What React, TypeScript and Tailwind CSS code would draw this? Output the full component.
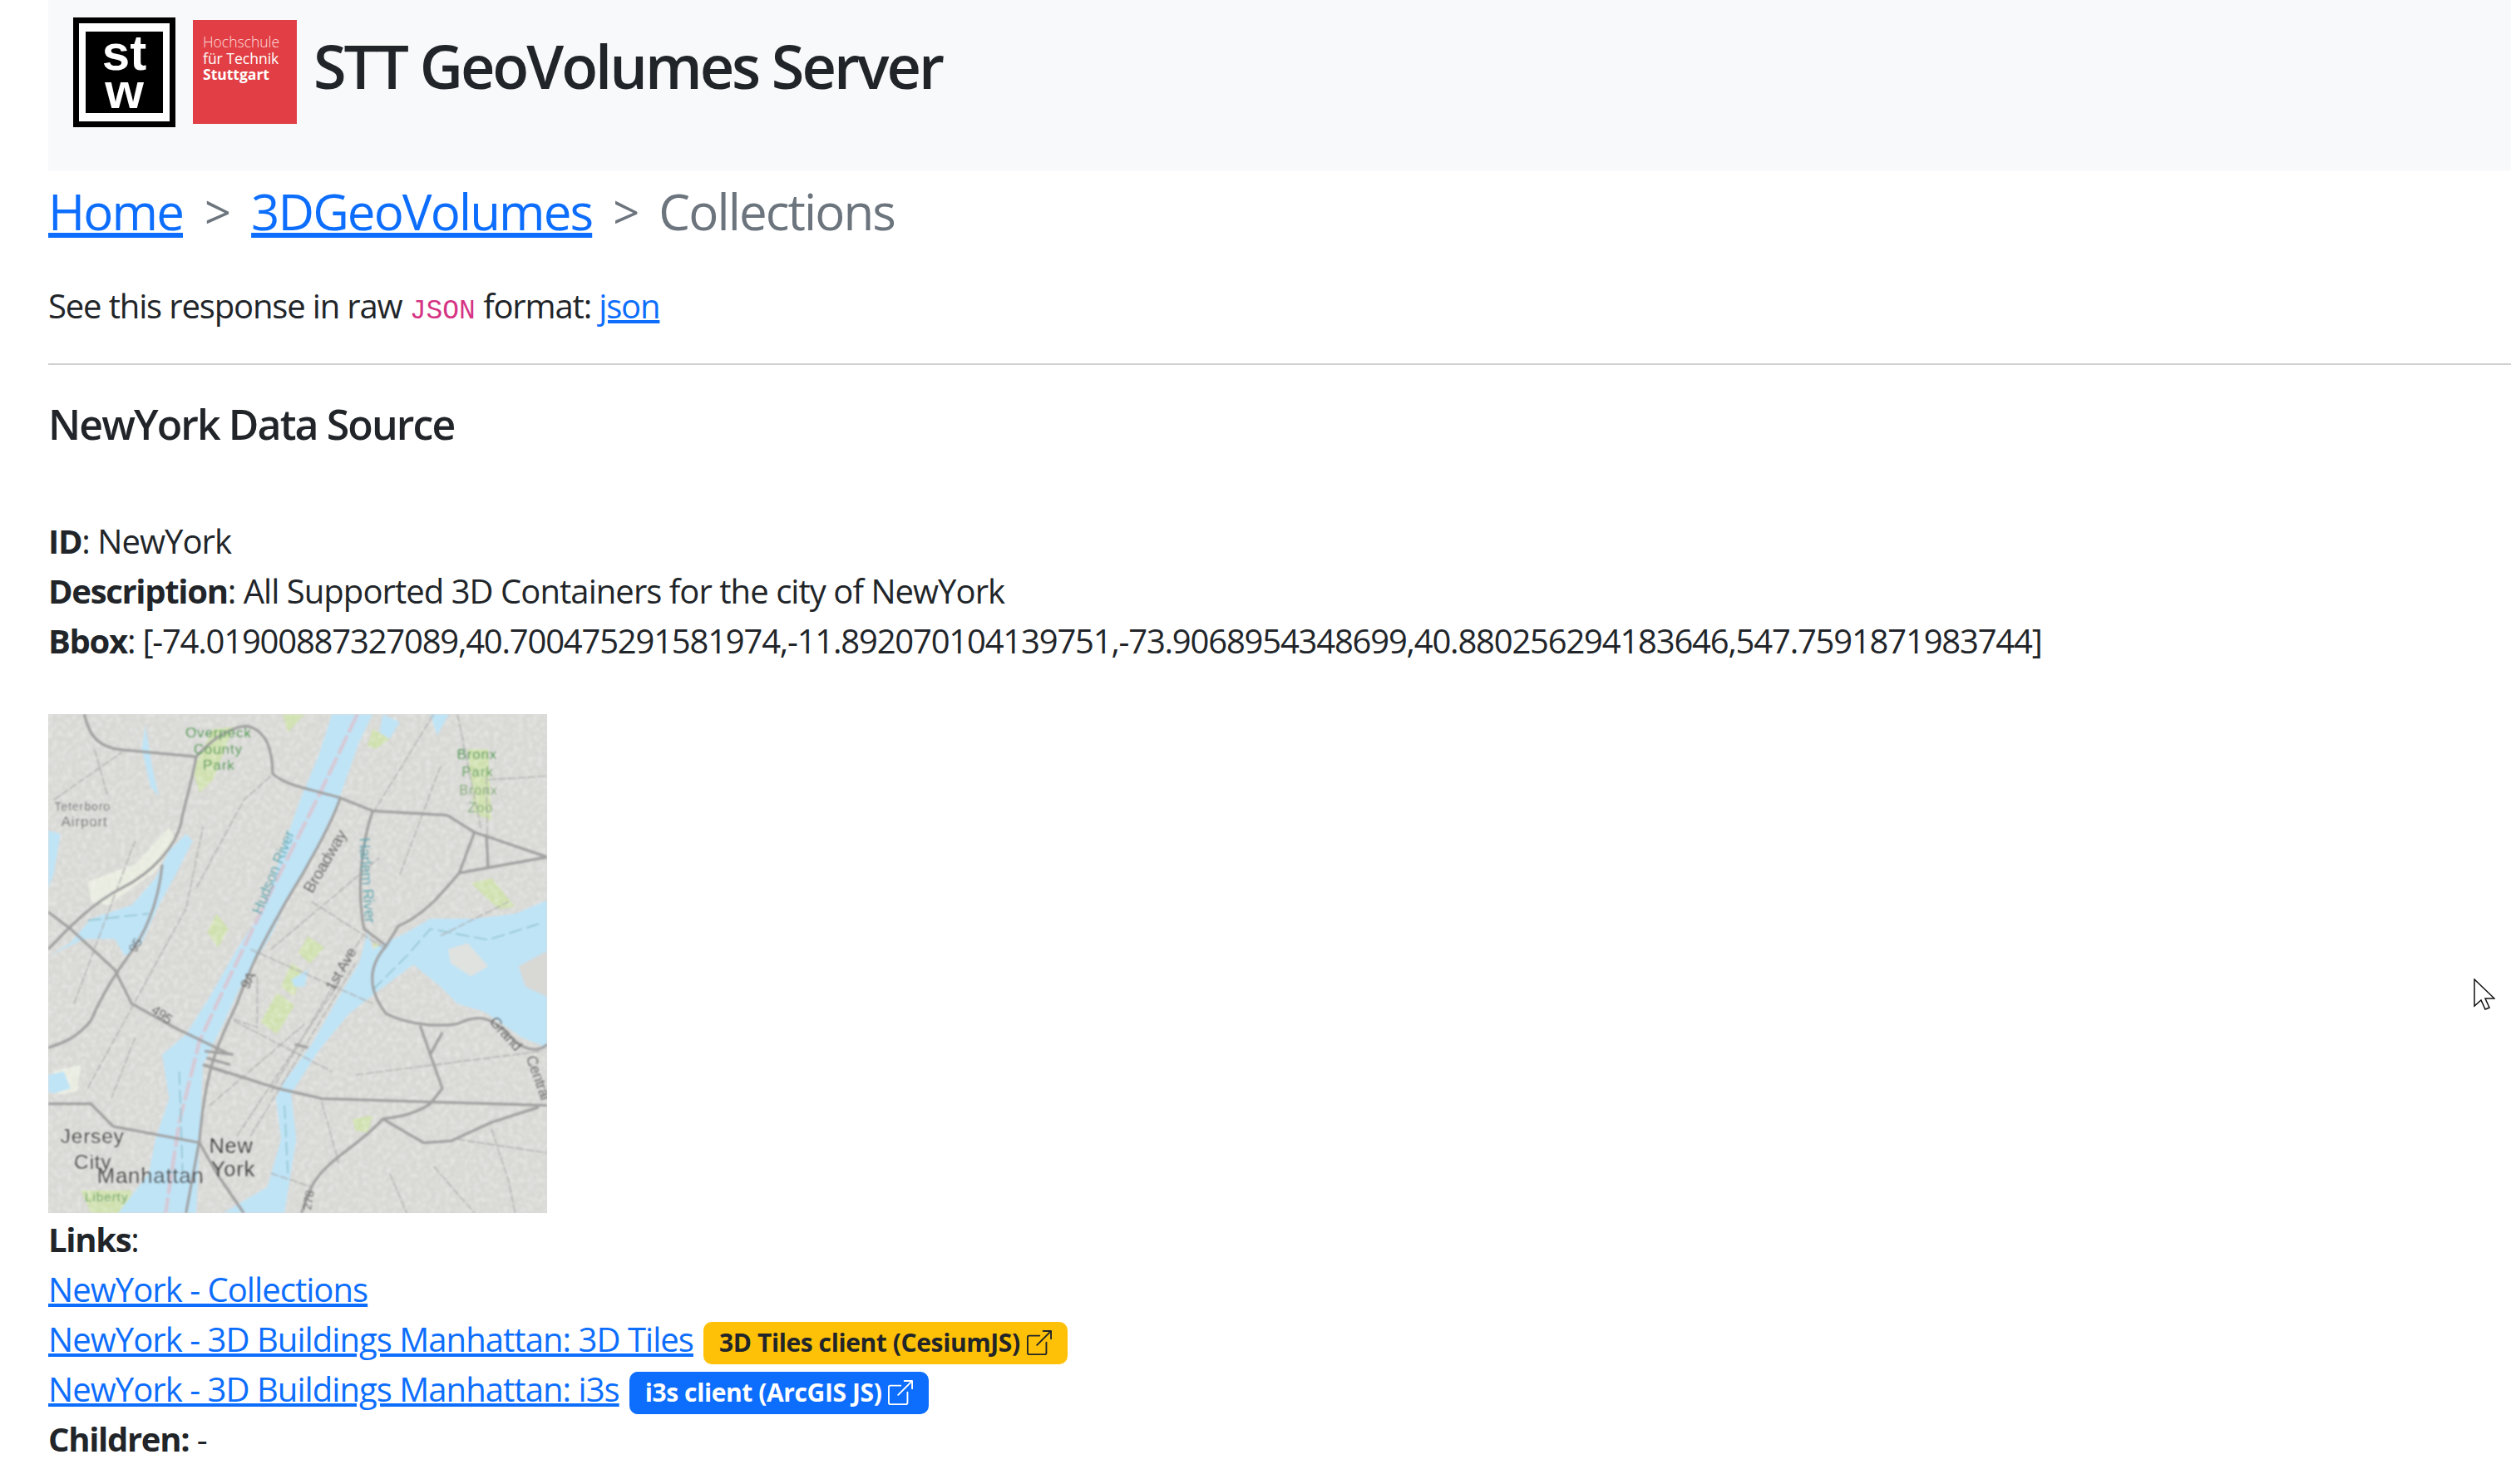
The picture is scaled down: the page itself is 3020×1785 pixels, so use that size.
import { BsBoxArrowUpRight } from 'react-icons/bs'

const roadsMajor = [
  'M150 47 C165 110 190 145 260 152 L480 172 C520 130 570 85 630 82 C690 95 705 160 705 222 C740 255 800 265 900 292 L1000 332 L1220 345 L1300 395 L1514 468',
  'M480 172 C470 240 445 310 435 370 C420 430 360 510 260 560 C180 600 110 670 44 740',
  'M380 490 C370 590 340 680 280 760 C230 830 200 880 170 950 C130 1000 90 1015 44 1030',
  'M44 630 L110 680 L240 800 L290 900 L415 970 L580 1050',
  'M905 292 C880 370 800 510 750 590 C700 680 650 760 600 900 C560 990 510 1060 490 1300 L450 1517',
  'M1000 332 C970 420 950 560 975 680 L1040 730 L1075 672 C1150 640 1200 580 1255 515 L1514 468',
  'M1300 395 L1255 515 M1335 400 L1340 500',
  'M1040 730 C985 790 985 860 1040 930 C1100 960 1180 970 1250 960 C1300 935 1340 930 1400 990 C1440 1040 1490 1045 1514 1020',
  'M500 1080 L720 1150 L850 1180 L1180 1190 L1514 1200',
  'M1140 965 L1205 1150 L1170 1195 C1120 1230 1060 1235 1030 1240 L1150 1310 L1230 1305 L1350 1250 L1490 1205',
  'M1205 985 L1170 1050',
  'M1030 1240 C960 1320 860 1360 820 1440 L790 1517',
  'M44 1195 L170 1195 L235 1262 L490 1310',
  'M490 1310 L540 1400 L620 1517',
  'M500 1080 L575 1105 M505 1040 L590 1050 M510 1060 L580 1080 M770 1020 L810 1030',
]

const roadsMinor = [
  'M640 740 L1000 900 M590 950 L880 1100 M700 740 L1020 470 M820 600 L1040 740',
  'M520 1200 L800 960 M600 1290 L900 840 M640 1290 L950 780 M700 1160 L970 700',
  'M660 820 L660 970 M590 945 L660 970 M1335 230 L1340 500 M1340 240 L1514 230',
  'M160 1150 L450 620 L500 380 M950 1110 L1500 1040 M850 1190 L900 1370 M1250 1300 L1514 1340',
  'M1350 1270 L1400 1420 L1420 1517 M700 1400 L820 1440 M540 1090 L720 1150',
  'M1000 340 L1180 47 M1250 47 L1320 390 M60 300 L260 160 M180 150 L220 290',
  'M480 560 L620 300 L700 230 M120 900 L300 420 M1080 520 L1200 200 M1200 700 L1400 600',
  'M300 1000 L230 1180 M1050 1400 L1100 1517 M1180 1380 L1300 1517',
]

const labels = [
  { t: 'Overpeck', x: 448, y: 116, s: 42, c: '#4f9a52' },
  { t: 'County', x: 472, y: 164, s: 42, c: '#4f9a52' },
  { t: 'Park', x: 500, y: 210, s: 42, c: '#4f9a52' },
  { t: 'Bronx', x: 1248, y: 180, s: 42, c: '#4f9a52' },
  { t: 'Park', x: 1262, y: 230, s: 42, c: '#6aa565' },
  { t: 'Bronx', x: 1255, y: 285, s: 40, c: '#86ad7c' },
  { t: 'Zoo', x: 1280, y: 337, s: 40, c: '#86ad7c' },
  { t: 'Teterboro', x: 62, y: 330, s: 35, c: '#7c7c7c' },
  { t: 'Airport', x: 82, y: 378, s: 42, c: '#7c7c7c' },
  { t: 'Jersey', x: 80, y: 1312, s: 60, c: '#4d4d4d' },
  { t: 'City', x: 120, y: 1386, s: 60, c: '#4d4d4d' },
  { t: 'Manhattan', x: 188, y: 1430, s: 63, c: '#4d4d4d' },
  { t: 'New', x: 518, y: 1340, s: 62, c: '#3f3f3f' },
  { t: 'York', x: 524, y: 1410, s: 62, c: '#3f3f3f' },
  { t: 'Liberty', x: 152, y: 1482, s: 38, c: '#6aa565' },
]

const rotated = [
  { t: 'Hudson River', at: 'translate(672 640) rotate(-68)', s: 45, c: '#5da7b0' },
  { t: 'Harlem River', at: 'translate(960 412) rotate(86)', s: 45, c: '#5da7b0' },
  { t: 'Broadway', at: 'translate(822 578) rotate(-60)', s: 48, c: '#666' },
  { t: '1st Ave', at: 'translate(885 865) rotate(-60)', s: 44, c: '#666' },
  { t: '9A', at: 'translate(634 860) rotate(-62)', s: 42, c: '#666' },
  { t: '95', at: 'translate(302 752) rotate(-60)', s: 38, c: '#666' },
  { t: '495', at: 'translate(345 925) rotate(35)', s: 40, c: '#666' },
  { t: 'Grand', at: 'translate(1342 955) rotate(48)', s: 44, c: '#666' },
  { t: 'Central', at: 'translate(1450 1060) rotate(70)', s: 44, c: '#666' },
  { t: '278', at: 'translate(818 1510) rotate(-80)', s: 36, c: '#666' },
]

function MapThumb() {
  return (
    <svg viewBox="44 47 1470 1470" className="block w-[600px] h-[600px]">
      <defs>
        <filter id="grain" x="0" y="0" width="100%" height="100%">
          <feTurbulence type="fractalNoise" baseFrequency="0.07" numOctaves="4" seed="9" />
          <feColorMatrix values="0 0 0 0 1 0 0 0 0 1 0 0 0 0 0.98 1.8 0 0 0 -0.7" />
        </filter>
        <filter id="soft"><feGaussianBlur stdDeviation="2.2" /></filter>
      </defs>
      <rect x="44" y="47" width="1470" height="1470" fill="#d8d8d5" />
      <g filter="url(#soft)">
        {/* parks */}
        <g fill="#cfe0ae">
          <path d="M540 635 L575 680 L545 735 L512 690Z" />
          <path d="M810 702 L858 735 L815 782 L780 750Z" />
          <path d="M718 868 L770 905 L718 990 L670 955Z" />
          <path d="M760 780 L790 800 L770 880 L730 850Z" />
          <path d="M470 210 L530 90 L590 85 L530 240 L490 280Z" />
          <path d="M735 47 L800 47 L750 100Z" />
          <path d="M1000 90 L1050 120 L1010 150 L985 140Z" />
          <path d="M1280 150 L1340 150 L1350 360 L1300 340Z" />
          <path d="M1290 545 L1350 530 L1420 615 L1370 620Z" />
          <path d="M1000 720 L1030 730 L1010 770Z" />
          <path d="M940 1240 L1000 1230 L985 1280 L950 1275Z" />
          <path d="M140 1450 L290 1450 L280 1517 L170 1517Z" />
        </g>
        <g fill="#e8ebdf">
          <path d="M160 540 L300 490 L400 380 L420 420 L360 510 L220 610 L170 600Z" />
          <path d="M60 1100 L140 1080 L130 1160 L70 1170Z" />
        </g>
        {/* texture of the built-up area */}
        <rect x="44" y="47" width="1470" height="1470" filter="url(#grain)" opacity="0.45" />
        {/* water */}
        <g fill="#bfe4f6">
          <path d="M880 47 L1000 47 L960 130 L900 300 L830 450 L760 570 L700 700 L620 830 L560 960 L500 1080 L490 1300 L480 1517 L250 1517 L340 1400 L360 1300 L400 1180 L380 1050 L450 990 L520 880 L600 740 L680 620 L740 430 L790 290 L840 170Z" />
          <path d="M1514 595 L1420 635 L1300 650 L1170 650 L1100 690 L1000 740 L985 690 L960 780 L900 880 L820 1020 L740 1130 L715 1180 L730 1300 L690 1440 L560 1517 L740 1517 L775 1300 L760 1165 L840 1040 L930 930 L1020 860 L1120 785 L1200 850 L1250 900 L1330 925 L1440 1000 L1514 1030Z" />
          <path d="M44 390 L80 400 L60 520 L44 560Z" />
          <path d="M44 760 L110 720 L170 650 L290 610 L360 530 L400 450 L450 400 L470 420 L420 520 L370 610 L320 720 L270 760 L240 710 L150 710Z" />
          <path d="M44 1110 L90 1100 L110 1150 L60 1165 L44 1160Z" />
          <path d="M1030 47 L1080 70 L1050 120 L1020 100Z" />
          <path d="M1170 47 L1225 47 L1190 110Z" />
          <path d="M330 80 L350 200 L370 290 L345 260 L320 150Z" />
          <path d="M760 830 L810 800 L800 850 L770 850Z" />
        </g>
        <path d="M1222 740 L1280 722 L1340 790 L1290 820 L1230 780Z" fill="#e0e2df" />
        <path d="M1430 790 L1514 745 L1514 880 L1450 850Z" fill="#d8d8d5" />
        {/* state line and channels */}
        <path d="M955 47 L840 290 L700 570 L560 860 L490 1010 L430 1250 L390 1517" fill="none" stroke="#d6c9d6" strokeWidth="11" strokeDasharray="60 10" />
        <path d="M160 655 L340 635 M1000 860 L1100 760 L1170 680 L1340 712 L1490 665 M430 1100 L440 1400 M740 1200 L750 1400" fill="none" stroke="#8fc2cc" strokeWidth="4" strokeDasharray="40 14" />
        {/* roads */}
        <g fill="none" strokeLinejoin="round">
          {roadsMinor.map((d) => (
            <path key={d} d={d} stroke="#adadad" strokeWidth="3.5" strokeDasharray="24 5" />
          ))}
          {roadsMajor.map((d) => (
            <path key={d} d={d} stroke="#a0a0a0" strokeWidth="8" />
          ))}
        </g>
        {rotated.map((l) => (
          <text key={l.t} transform={l.at} fontSize={l.s} fill={l.c} fontFamily="Liberation Sans, sans-serif">
            {l.t}
          </text>
        ))}
        {labels.map((l) => (
          <text key={l.t + l.y} x={l.x} y={l.y} fontSize={l.s} fill={l.c} fontFamily="Liberation Sans, sans-serif" letterSpacing="2">
            {l.t}
          </text>
        ))}
      </g>
    </svg>
  )
}

function Logos() {
  return (
    <div className="flex items-start">
      <div className="mt-[21px] w-[123px] h-[132px] bg-black p-[7px]">
        <div className="w-full h-full bg-white px-[8px] py-[10px]">
          <div className="w-full h-full bg-black flex flex-col items-center justify-center text-white font-bold leading-[46px] text-[60px] tracking-normal font-['Liberation_Sans',sans-serif]">
            <span>st</span>
            <span>w</span>
          </div>
        </div>
      </div>
      <div className="ml-[21px] mt-[24px] w-[125px] h-[125px] bg-[#e13f45] pt-[17px] pl-[12px] text-[17.5px] leading-[19.5px] tracking-normal text-white font-['Open_Sans',sans-serif]">
        <div className="font-light text-[#ffdcdc]">Hochschule</div>
        <div>für Technik</div>
        <div className="font-bold">Stuttgart</div>
      </div>
    </div>
  )
}

function Badge({ label, className }: { label: string; className: string }) {
  return (
    <span className={`inline-flex items-center h-[51px] px-[19px] ml-[12px] rounded-[10px] text-[30px] font-bold tracking-[-0.4px] align-middle ${className}`}>
      {label}
      <BsBoxArrowUpRight className="ml-[8px] w-[30px] h-[30px]" />
    </span>
  )
}

const linkCls = 'text-[#0d6efd] underline'

export default function App() {
  return (
    <div className="relative min-h-[1785px] bg-white overflow-hidden pl-[58px] text-[40px] leading-[60px] text-[#212529] font-['Open_Sans',sans-serif] tracking-[-0.95px]">
      <header className="h-[205px] bg-[#f8f9fa] flex items-start pl-[30px]">
        <Logos />
        <h1 className="ml-[20px] mt-[39px] text-[72px] leading-[80px] font-semibold tracking-[-3px]">STT GeoVolumes Server</h1>
      </header>

      <nav className="flex items-center h-[96px] pt-[2px] text-[60px] leading-[94px] tracking-[-1.9px]">
        <a className={linkCls}>Home</a>
        <span className="mx-[26px] text-[56px] text-[#6c757d]">&gt;</span>
        <a className={linkCls}>3DGeoVolumes</a>
        <span className="mx-[25px] text-[56px] text-[#6c757d]">&gt;</span>
        <span className="text-[#6c757d]">Collections</span>
      </nav>

      <p className="mt-[37px] tracking-[-1.15px]">
        See this response in raw{' '}
        <code className="text-[33px] text-[#d63384] font-['Liberation_Mono',monospace] tracking-normal">JSON</code> format:{' '}
        <a className={linkCls}>json</a>
      </p>

      <hr className="mt-[32px] border-0 h-[2px] bg-[#cfd0d1]" />

      <h2 className="mt-[41px] text-[50px] leading-[60px] font-semibold tracking-[-1.9px]">NewYork Data Source</h2>

      <div className="mt-[81px]">
        <div><b className="tracking-[-1.3px]">ID</b>: NewYork</div>
        <div><b className="tracking-[-1.3px]">Description</b>: All Supported 3D Containers for the city of NewYork</div>
        <div className="tracking-[-1.2px]">
          <b className="tracking-[-1.3px]">Bbox</b>: [-74.01900887327089,40.700475291581974,-11.892070104139751,-73.9068954348699,40.880256294183646,547.7591871983744]
        </div>
      </div>

      <div className="mt-[58px]"><MapThumb /></div>

      <div className="pt-[2px]">
        <div><b className="tracking-[-1.3px]">Links</b>:</div>
        <div><a className={linkCls}>NewYork - Collections</a></div>
        <div>
          <a className={linkCls}>NewYork - 3D Buildings Manhattan: 3D Tiles</a>
          <Badge label="3D Tiles client (CesiumJS)" className="bg-[#ffc107] text-[#212529]" />
        </div>
        <div>
          <a className={linkCls}>NewYork - 3D Buildings Manhattan: i3s</a>
          <Badge label="i3s client (ArcGIS JS)" className="bg-[#0d6efd] text-white" />
        </div>
        <div><b className="tracking-[-1.3px]">Children:</b> -</div>
      </div>

      {/* mouse pointer caught in the screenshot */}
      <svg viewBox="0 0 26 40" className="absolute left-[2975px] top-[1177px] w-[26px] h-[40px]">
        <path d="M1 1 L1 33 L9 26 L14 37 L19 35 L14 24 L25 24 Z" fill="#fff" stroke="#111" strokeWidth="1.5" strokeLinejoin="miter" />
      </svg>
    </div>
  )
}
